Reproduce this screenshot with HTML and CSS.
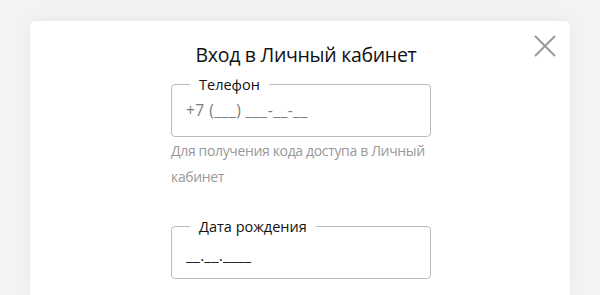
FILE: index.html
```html
<!DOCTYPE html>
<html lang="ru">
<head>
    <meta charset="UTF-8">
    <meta name="viewport" content="width=device-width, initial-scale=1.0">
    <title>Вход в Личный кабинет</title>
    <link rel="stylesheet" href="styles.css">
</head>
<body>
    <div class="modal">
        <button class="close-btn" aria-label="Закрыть">
            <svg width="22" height="22" viewBox="0 0 22 22">
                <path d="M1 1 L21 21 M21 1 L1 21" stroke="#9a9a9a" stroke-width="2" fill="none"/>
            </svg>
        </button>

        <h2 class="modal-title">Вход в Личный кабинет</h2>

        <form class="login-form">
            <fieldset class="field">
                <legend>Телефон</legend>
                <input type="text" placeholder="+7 (___) ___-__-__">
            </fieldset>
            <p class="hint">Для получения кода доступа в Личный кабинет</p>

            <fieldset class="field field-date">
                <legend>Дата рождения</legend>
                <input type="text" placeholder="__.__.____">
            </fieldset>
        </form>
    </div>
</body>
</html>
```

FILE: styles.css
```css
body, html {
    margin: 0;
    padding: 0;
    font-family: "Open Sans", "Noto Sans", sans-serif;
    background-color: #f3f3f3;
    overflow: hidden;
}

body {
    padding: 21px 30px 0;
    height: 295px;
    box-sizing: border-box;
}

.modal {
    position: relative;
    background-color: #fff;
    border-radius: 6px 6px 0 0;
    box-shadow: 0 0 20px rgba(0, 0, 0, 0.05);
    height: 100%;
    padding-top: 20px;
    box-sizing: border-box;
}

.close-btn {
    position: absolute;
    top: 14px;
    right: 14px;
    background: none;
    border: none;
    padding: 0;
    cursor: pointer;
    line-height: 0;
}

.modal-title {
    margin: 0;
    text-align: center;
    font-weight: 400;
    font-size: 19.5px;
    letter-spacing: -0.3px;
    color: #111;
    padding-left: 12px;
}

.login-form {
    width: 260px;
    margin: 7px auto 0;
    padding-left: 2px;
}

.field {
    margin: 0;
    padding: 0 14px 8px;
    border: 1px solid #bcbcc4;
    border-radius: 4px;
    height: 62px;
    box-sizing: border-box;
}

.field legend {
    padding: 0 9px;
    margin-left: 4px;
    font-size: 14.5px;
    color: #111;
}

.field input {
    border: none;
    outline: none;
    font-family: inherit;
    font-size: 15.5px;
    letter-spacing: 0.5px;
    padding: 5px 0 0;
    margin: 0;
    width: 100%;
    color: #333;
}

.field input::placeholder {
    color: #7c7c7c;
}

.hint {
    margin: 0;
    padding-top: 1px;
    font-size: 14px;
    letter-spacing: -0.35px;
    line-height: 26px;
    color: #999;
}

.field-date {
    margin-top: 27px;
}

.field-date input {
    padding-top: 8px;
    letter-spacing: 0.3px;
}

.field-date input::placeholder {
    color: #222;
}
```
